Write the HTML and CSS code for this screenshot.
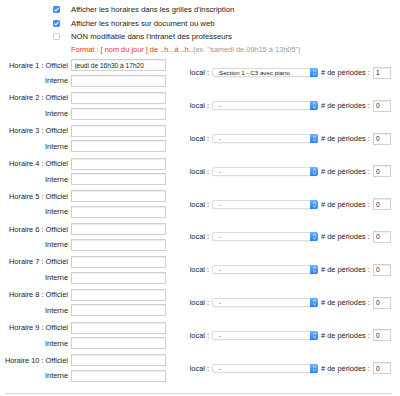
FILE: index.html
```html
<!DOCTYPE html>
<html lang="fr">
<head>
<meta charset="utf-8">
<link rel="stylesheet" href="styles.css">
</head>
<body>
<div class="page">
  <div class="options">
    <label class="opt"><span class="cb on"><svg viewBox="0 0 8 8" width="7" height="7"><path d="M1.8 4.2 L3.3 5.6 L6.2 2.3" fill="none" stroke="#fff" stroke-width="1.2"/></svg></span>Afficher les horaires dans les grilles d'inscription</label>
    <label class="opt"><span class="cb on"><svg viewBox="0 0 8 8" width="7" height="7"><path d="M1.8 4.2 L3.3 5.6 L6.2 2.3" fill="none" stroke="#fff" stroke-width="1.2"/></svg></span>Afficher les horaires sur document ou web</label>
    <label class="opt"><span class="cb"></span>NON modifiable dans l'intranet des professeurs</label>
    <div class="format"><span class="red">Format : [ nom du jour ] de ..h.. à ..h..</span> <span class="gray">(ex. "samedi de 09h15 à 13h05")</span></div>
  </div>

  <div class="horaires" id="horaires"></div>
  <hr class="sep">
</div>
<script src="app.js"></script>
</body>
</html>
```
FILE: app.js
```js
const rows = [
  { off: "jeudi de 16h30 à 17h20", local: "Section 1 - C3 avec piano", per: "1" }
];
for (let i = 2; i <= 10; i++) rows.push({ off: "", local: "-", per: "0" });
const arrow = '<svg viewBox="0 0 8 10" width="7" height="9"><path d="M2.3 3.8 L4 2.2 L5.7 3.8 M2.3 6.2 L4 7.8 L5.7 6.2" fill="none" stroke="#fff" stroke-width="0.9"/></svg>';
const host = document.getElementById('horaires');
host.innerHTML = rows.map((r, i) => `
  <div class="horaire">
    <div class="hleft">
      <div class="hrow"><span class="hlabel">Horaire ${i + 1} : Officiel</span><input class="txt" type="text" value="${r.off}"></div>
      <div class="hrow"><span class="hlabel">Interne</span><input class="txt" type="text" value=""></div>
    </div>
    <div class="hright">
      <span class="llabel">local :</span>
      <span class="selwrap"><select class="sel"><option>${r.local}</option></select><span class="arrow">${arrow}</span></span>
      <span class="plabel"># de périodes :</span>
      <input class="num" type="text" value="${r.per}">
    </div>
  </div>`).join('');
```
FILE: styles.css
```css
html, body {
  margin: 0;
  padding: 0;
  background: #fff;
}
body {
  font-family: "Liberation Sans", Arial, sans-serif;
  font-size: 7.4px;
  color: #1a1a1a;
}
.page {
  width: 400px;
  height: 396px;
  overflow: hidden;
}
.options {
  padding: 3px 0 0 53px;
  font-size: 7.7px;
}
.opt, .format {
  display: flex;
  align-items: center;
  height: 13.4px;
}
.cb {
  width: 7px;
  height: 7px;
  box-sizing: border-box;
  border: 1px solid #c8c8c8;
  border-radius: 1.5px;
  background: #fff;
  margin-right: 11px;
  display: inline-flex;
  align-items: center;
  justify-content: center;
}
.cb.on {
  border: none;
  background: #3f8ef5;
}
.cb svg { display: block; }
.format {
  padding-left: 18px;
  white-space: pre;
  font-size: 7.4px;
}
.red { color: #f52a2a; }
.gray { color: #9a9a9a; }

.horaire {
  display: flex;
  align-items: center;
  height: 32.8px;
}
.hleft {
  display: flex;
  flex-direction: column;
  width: 166px;
}
.hrow {
  display: flex;
  align-items: center;
  height: 15.6px;
}
.hlabel {
  width: 68px;
  text-align: right;
  white-space: nowrap;
  margin-right: 3px;
}
.txt, .num {
  box-sizing: border-box;
  height: 12px;
  border: 1px solid #d0d0d0;
  box-shadow: inset 0 1px 0 #eee;
  padding: 0 3px;
  font-family: inherit;
  font-size: 6.6px;
  color: #222;
  background: #fff;
  outline: none;
  margin: 0;
}
.txt { width: 95px; }
.num { width: 18px; padding: 0 2px; }
.hright {
  display: flex;
  align-items: center;
}
.llabel {
  width: 43px;
  text-align: right;
  margin-right: 3px;
}
.selwrap {
  position: relative;
  display: inline-block;
  width: 106px;
  height: 9px;
  margin-right: 3px;
}
.sel {
  appearance: none;
  -webkit-appearance: none;
  box-sizing: border-box;
  width: 106px;
  height: 9px;
  margin: 0;
  padding: 0 0 0 6px;
  border: 1px solid #dcdcdc;
  border-radius: 2px;
  background: #fff;
  font-family: inherit;
  font-size: 6.2px;
  color: #222;
  line-height: 7px;
  box-shadow: 0 0.5px 0.5px rgba(0,0,0,0.08);
}
.arrow {
  position: absolute;
  right: 0;
  top: 0;
  width: 8px;
  height: 9px;
  border-radius: 0 2px 2px 0;
  background: linear-gradient(#6cb1fb, #2a7ff2);
  display: flex;
  align-items: center;
  justify-content: center;
}
.arrow svg { display: block; }
.plabel {
  width: 49px;
  white-space: nowrap;
  margin-right: 3px;
}
.sep {
  margin: 8px 8px 0 5px;
  border: none;
  border-top: 1px solid #d4d4d4;
  height: 0;
}
```
